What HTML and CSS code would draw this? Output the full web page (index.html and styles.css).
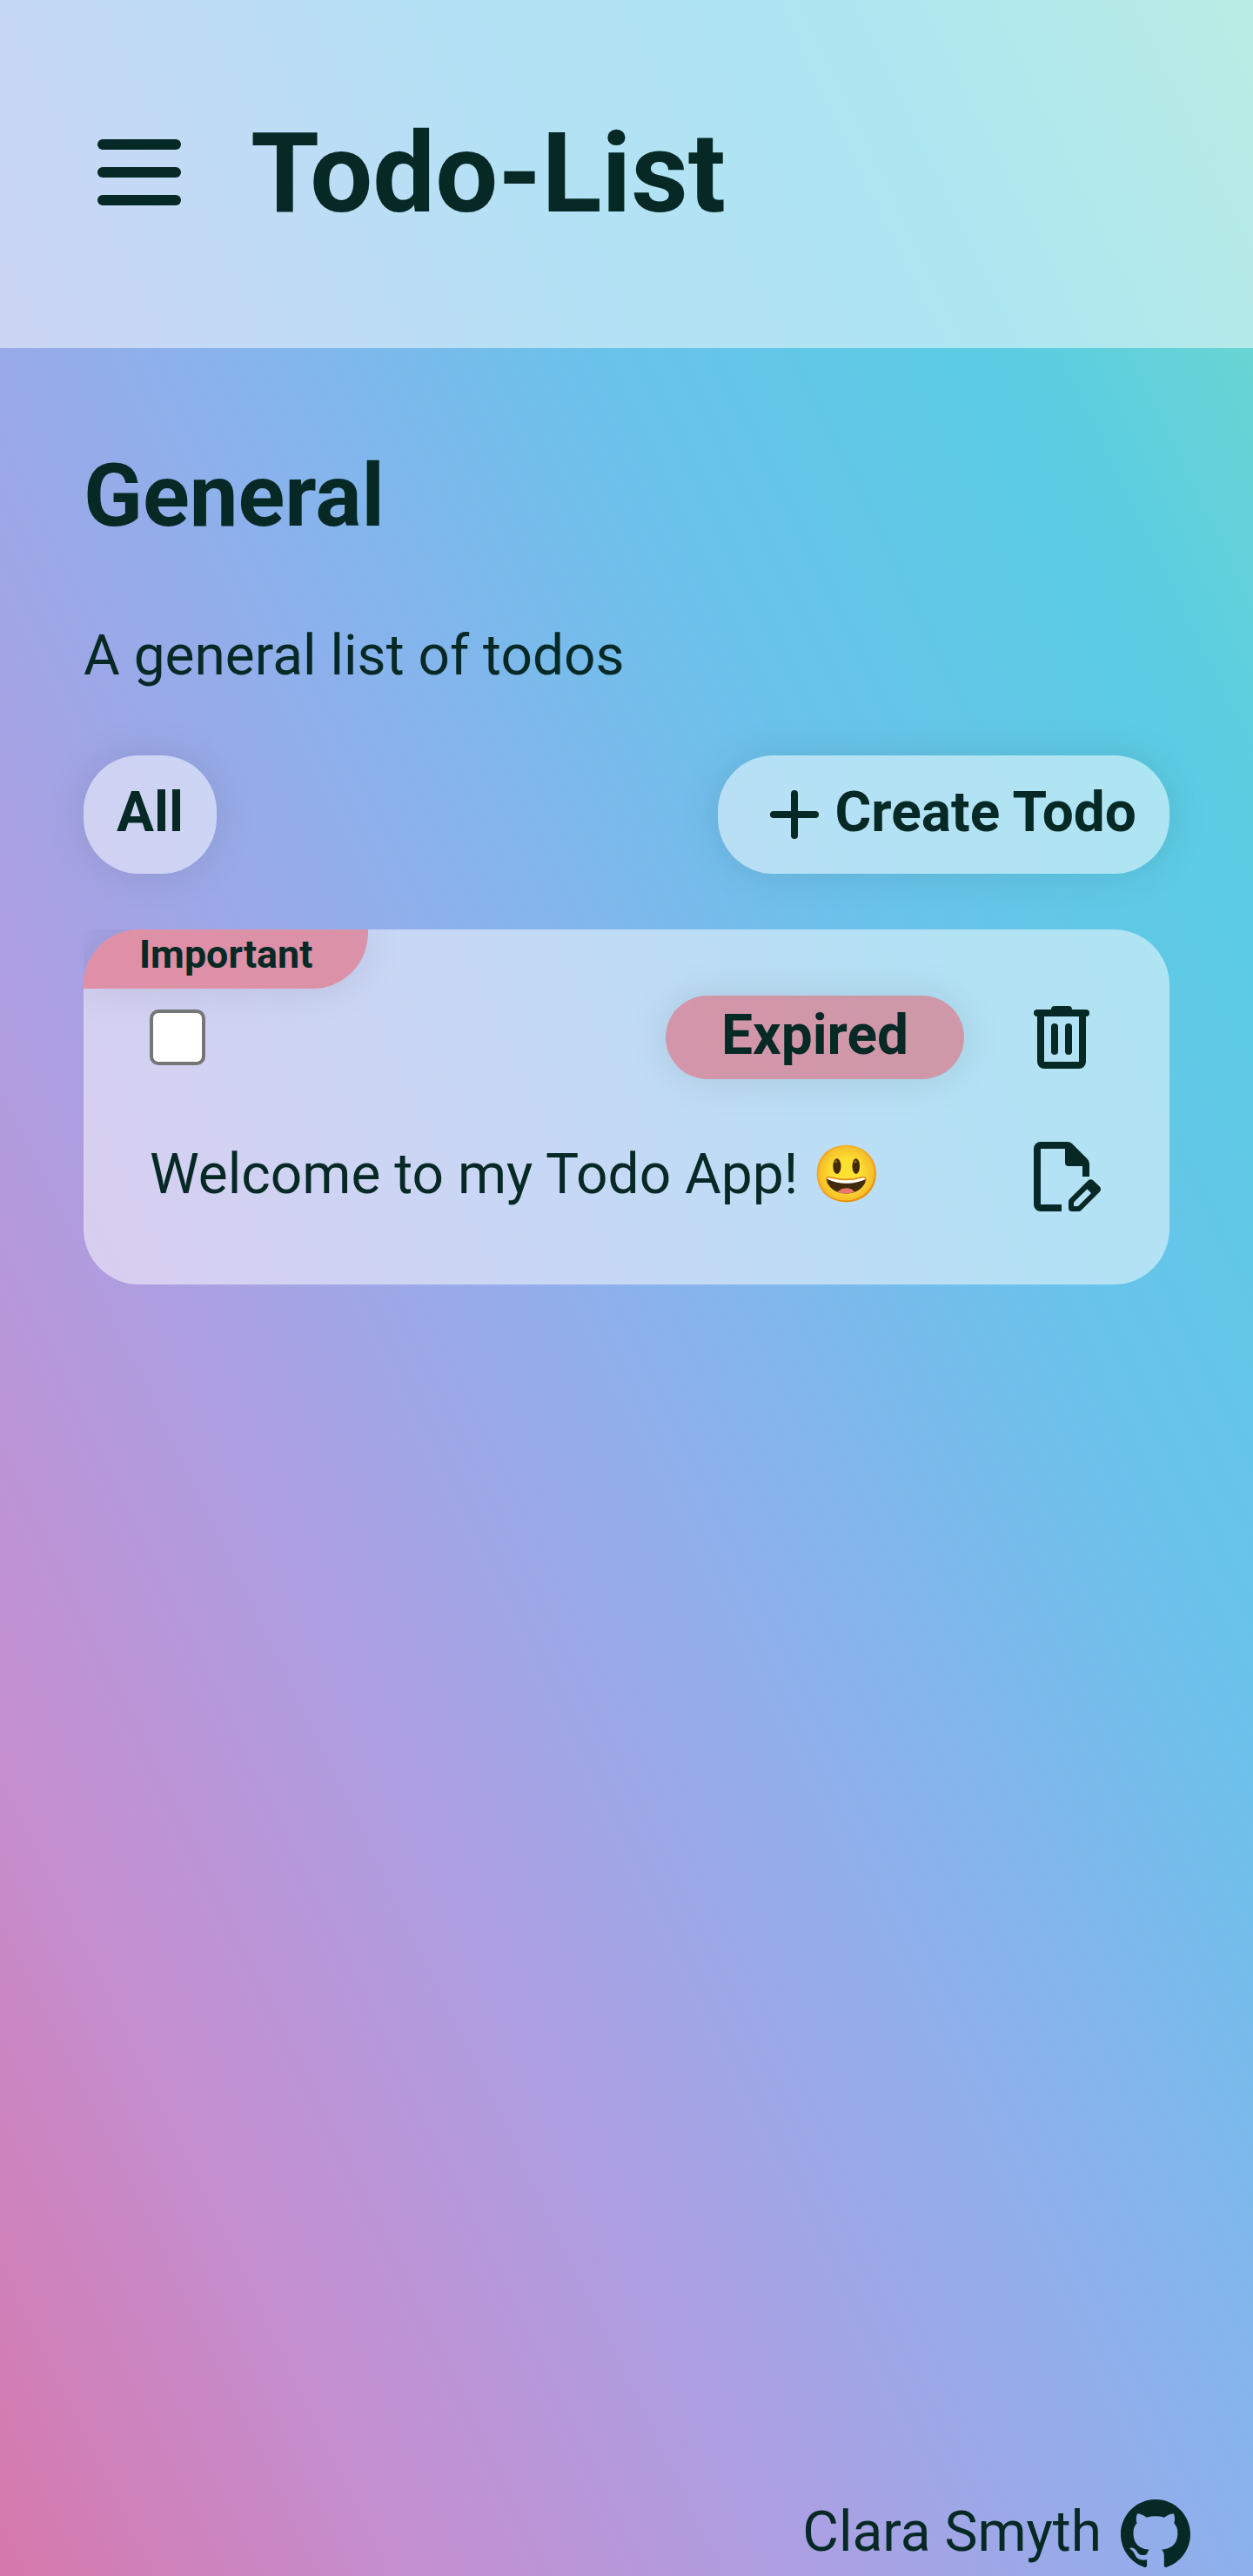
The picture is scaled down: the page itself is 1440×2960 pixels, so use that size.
FILE: index.html
```html
<!DOCTYPE html>
<html lang="en">
<head>
<meta charset="utf-8">
<title>Todo-List</title>
<link rel="stylesheet" href="styles.css">
</head>
<body>
<header class="header">
  <svg class="menu-icon" viewBox="0 0 128 128" aria-label="Menu">
    <rect x="16" y="26" width="96" height="12" rx="6"/>
    <rect x="16" y="58" width="96" height="12" rx="6"/>
    <rect x="16" y="90" width="96" height="12" rx="6"/>
  </svg>
  <h1 class="title">Todo-List</h1>
</header>
<main class="main">
  <h2 class="list-name">General</h2>
  <p class="list-desc">A general list of todos</p>
  <div class="toolbar">
    <button class="btn">All</button>
    <button class="btn">
      <svg class="icon" viewBox="0 0 96 96"><path d="M50 24v48M26 48h48" fill="none" stroke="currentColor" stroke-width="8" stroke-linecap="round"/></svg>
      Create Todo
    </button>
  </div>
  <ul class="todos">
    <li class="todo">
      <span class="tag">Important</span>
      <div class="row">
        <input type="checkbox" class="check">
        <span class="due">Expired</span>
        <svg class="icon" viewBox="0 0 96 96">
          <path fill-rule="evenodd" d="M36 16a4 4 0 0 1 4-4H56a4 4 0 0 1 4 4H76a4 4 0 0 1 0 8V76a8 8 0 0 1-8 8H28a8 8 0 0 1-8-8V24a4 4 0 0 1 0-8ZM28 24V76H68V24Z"/>
          <rect x="36" y="32" width="8" height="36" rx="4"/>
          <rect x="52" y="32" width="8" height="36" rx="4"/>
        </svg>
      </div>
      <div class="row">
        <span class="text">Welcome to my Todo App! 😃</span>
        <svg class="icon" viewBox="0 0 96 96">
          <path d="M24 8H54.5a8 8 0 0 1 5.7 2.3L77.700 27.700A8 8 0 0 1 80 33.400V48H72V36H56a4 4 0 0 1-4-4V16H24V80H48V88H24a8 8 0 0 1-8-8V16a8 8 0 0 1 8-8Z"/>
          <path fill-rule="evenodd" d="M56 84V76.500a4 4 0 0 1 1.200-2.800L78.500 52.400a4.200 4.200 0 0 1 6 0L91.800 59.600a4.200 4.200 0 0 1 0 6L70.500 86.800a4 4 0 0 1-2.800 1.200H60a4 4 0 0 1-4-4ZM62 82H67L82 67L77.500 62.300L62 77.500Z"/>
        </svg>
      </div>
    </li>
  </ul>
</main>
<footer class="footer">
  <span class="author">Clara Smyth</span>
  <svg class="github" viewBox="0 0 24 24" aria-label="GitHub"><path d="M12 .297c-6.63 0-12 5.373-12 12 0 5.303 3.438 9.800 8.205 11.385.6.113.82-.258.82-.577 0-.285-.01-1.040-.015-2.040-3.338.724-4.042-1.610-4.042-1.610C4.422 18.070 3.633 17.700 3.633 17.700c-1.087-.744.084-.729.084-.729 1.205.084 1.838 1.236 1.838 1.236 1.070 1.835 2.809 1.305 3.495.998.108-.776.417-1.305.76-1.605-2.665-.3-5.466-1.332-5.466-5.930 0-1.310.465-2.380 1.235-3.220-.135-.303-.54-1.523.105-3.176 0 0 1.005-.322 3.300 1.230.96-.267 1.980-.399 3-.405 1.020.006 2.040.138 3 .405 2.280-1.552 3.285-1.230 3.285-1.230.645 1.653.24 2.873.12 3.176.765.84 1.230 1.910 1.230 3.220 0 4.610-2.805 5.625-5.475 5.920.42.36.81 1.096.81 2.220 0 1.606-.015 2.896-.015 3.286 0 .315.21.69.825.57C20.565 22.092 24 17.592 24 12.297c0-6.627-5.373-12-12-12"/></svg>
</footer>
</body>
</html>
```
FILE: styles.css
```css
* { box-sizing: border-box; }
body {
  margin: 0;
  min-height: 2960px;
  display: flex;
  flex-direction: column;
  font-family: Roboto, sans-serif;
  font-size: 64px;
  line-height: 76px;
  color: #062925;
  background: linear-gradient(to top right, #d678ab, #c48fd0, #aaa0e3, #8cb1ec, #6ac2eb, #5acde3, #72d9c8);
}
svg { fill: currentColor; display: block; flex: none; }
.header {
  height: 400px;
  padding: 0 96px 4px;
  display: flex;
  align-items: center;
  gap: 64px;
  background: rgba(255, 255, 255, .5);
}
.menu-icon { width: 128px; height: 128px; }
.title { margin: 0; padding-top: 4px; font-size: 127.6px; line-height: 150px; }
.main { flex: 1; padding: 0 96px; }
.list-name { margin: 113px 0 0; font-size: 99.6px; line-height: 114px; }
.list-desc { margin: 89px 0 0; }
.toolbar { margin-top: 76px; display: flex; justify-content: space-between; }
.btn {
  height: 136px;
  padding: 0 38px 4px;
  display: flex;
  align-items: center;
  border: 0;
  border-radius: 64px;
  font: inherit;
  font-weight: 700;
  color: inherit;
  background: rgba(255, 255, 255, .5);
  box-shadow: 0 0 48px rgba(0, 0, 0, .1);
}
.btn .icon { margin-top: 4px; }
.icon { width: 96px; height: 96px; }
.todos { list-style: none; margin: 64px 0 0; padding: 0; overflow: hidden; }
.todo {
  height: 408px;
  padding-right: 76px;
  border-radius: 64px;
  background: rgba(255, 255, 255, .5);
}
.tag {
  display: block;
  width: max-content;
  height: 68px;
  padding: 2px 64px;
  font-size: 44.8px;
  line-height: 53px;
  font-weight: 700;
  border-radius: 64px 0;
  background: rgba(235, 78, 92, .5);
  box-shadow: 0 0 48px rgba(0, 0, 0, .1);
}
.row { display: flex; align-items: center; padding-left: 76px; margin-top: 8px; }
.row + .row { margin-top: 64px; }
.check {
  appearance: none;
  width: 64px;
  height: 64px;
  margin: 0 auto 0 0;
  border: 4px solid #767676;
  border-radius: 10px;
  background: #fff;
}
.due {
  height: 96px;
  padding: 8px 64px;
  margin-right: 64px;
  border-radius: 48px;
  font-weight: 700;
  background: rgba(232, 79, 93, .5);
  box-shadow: 0 0 48px rgba(0, 0, 0, .1);
}
.text { flex: 1; margin-bottom: 4px; }
.footer {
  display: flex;
  justify-content: flex-end;
  align-items: center;
  gap: 22px;
  padding: 0 72px 9px;
}
.author { margin-bottom: 3px; }
.github { width: 80px; height: 80px; }
```
